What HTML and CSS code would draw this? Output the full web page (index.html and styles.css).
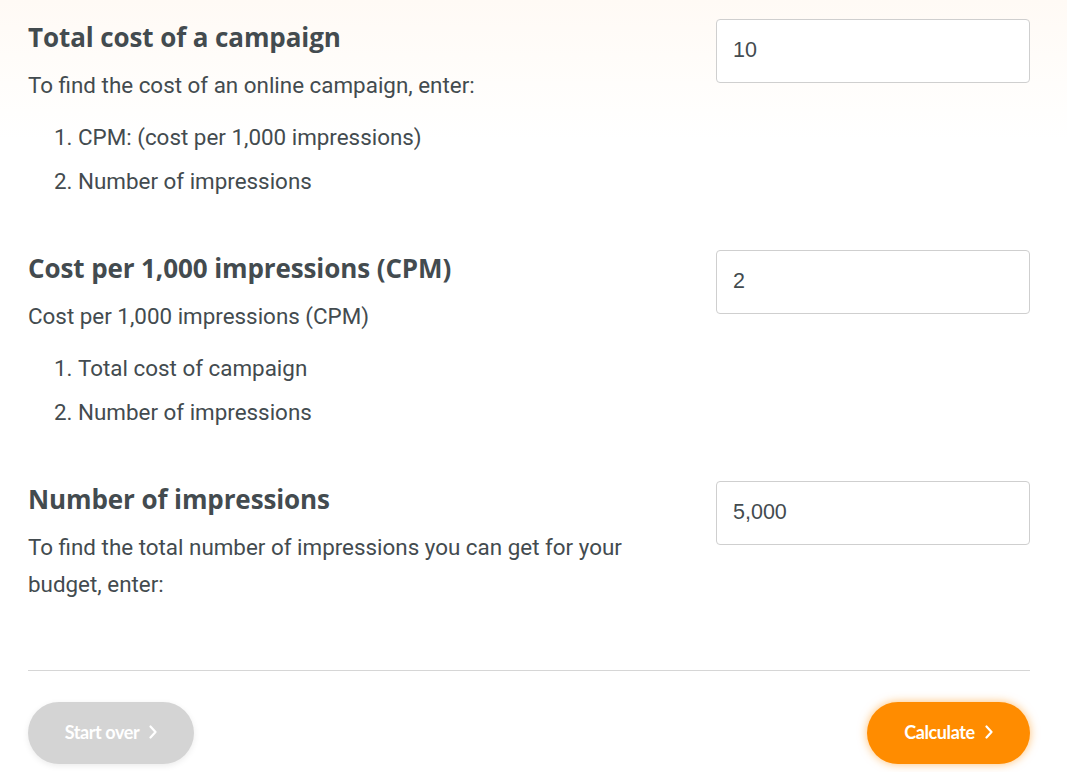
FILE: index.html
```html
<!DOCTYPE html>
<html lang="en">
<head>
<meta charset="utf-8">
<title>CPM Calculator</title>
<link rel="stylesheet" href="styles.css">
</head>
<body>
<div class="calc">
  <section class="row">
    <div class="info">
      <h2 class="title">Total cost of a campaign</h2>
      <p class="desc">To find the cost of an online campaign, enter:</p>
      <ol class="steps">
        <li>CPM: (cost per 1,000 impressions)</li>
        <li>Number of impressions</li>
      </ol>
    </div>
    <input class="field" type="text" value="10">
  </section>
  <section class="row">
    <div class="info">
      <h2 class="title">Cost per 1,000 impressions (CPM)</h2>
      <p class="desc">Cost per 1,000 impressions (CPM)</p>
      <ol class="steps">
        <li>Total cost of campaign</li>
        <li>Number of impressions</li>
      </ol>
    </div>
    <input class="field" type="text" value="2">
  </section>
  <section class="row">
    <div class="info">
      <h2 class="title">Number of impressions</h2>
      <p class="desc">To find the total number of impressions you can get for your budget, enter:</p>
    </div>
    <input class="field" type="text" value="5,000">
  </section>
  <hr class="sep">
  <div class="actions">
    <button class="btn btn-reset" type="button">Start over <svg class="chev" viewBox="0 0 8 14" width="8" height="14"><polyline points="1.5,1.5 6.5,7 1.5,12.5" fill="none" stroke="currentColor" stroke-width="2.2" stroke-linecap="round" stroke-linejoin="round"/></svg></button>
    <button class="btn btn-go" type="button">Calculate <svg class="chev" viewBox="0 0 8 14" width="8" height="14"><polyline points="1.5,1.5 6.5,7 1.5,12.5" fill="none" stroke="currentColor" stroke-width="2.2" stroke-linecap="round" stroke-linejoin="round"/></svg></button>
  </div>
</div>
</body>
</html>
```

FILE: styles.css
```css
html, body {
  margin: 0;
  padding: 0;
}
body {
  background: linear-gradient(to bottom, #fffaf5 0px, #ffffff 140px);
  color: #434b4f;
  font-family: Roboto, "Liberation Sans", sans-serif;
  width: 1067px;
  height: 772px;
  overflow: hidden;
}
.calc {
  padding: 19px 37px 0 28px;
}
.row {
  display: flex;
  justify-content: space-between;
  align-items: flex-start;
  margin-bottom: 47px;
}
.row:last-of-type {
  margin-bottom: 0;
}
.info {
  width: 620px;
}
.title {
  margin: 0;
  font-family: "Open Sans", "Noto Sans", sans-serif;
  font-weight: 700;
  font-size: 26px;
  line-height: 36px;
  letter-spacing: -0.1px;
  color: #434b4f;
}
.desc {
  margin: 12px 0 0;
  font-size: 22.4px;
  line-height: 37px;
}
.steps {
  margin: 11px 0 0;
  padding-left: 50px;
  font-size: 22.4px;
  line-height: 44px;
}
.field {
  box-sizing: border-box;
  width: 314px;
  height: 64px;
  margin: 0;
  padding: 0 16px 2px;
  border: 1px solid #cfcfcf;
  border-radius: 4px;
  background: #fff;
  font-family: "Liberation Sans", Arial, sans-serif;
  font-size: 21.5px;
  color: #434b4f;
  outline: none;
}
.sep {
  margin: 67px 0 0;
  border: 0;
  border-top: 1px solid #d6d6d6;
  height: 0;
}
.actions {
  display: flex;
  justify-content: space-between;
  margin-top: 31px;
}
.btn {
  display: inline-flex;
  align-items: center;
  justify-content: center;
  gap: 10px;
  height: 62px;
  padding: 0 0 3px;
  border: 0;
  border-radius: 31px;
  font-family: "Lato", "Open Sans", sans-serif;
  font-weight: 700;
  font-size: 18px;
  letter-spacing: -0.4px;
  color: #fff;
  cursor: pointer;
}
.btn-reset {
  width: 166px;
  background: #d4d4d4;
  box-shadow: 0 2px 6px rgba(0, 0, 0, 0.08);
}
.btn-go {
  width: 163px;
  background: #ff8c00;
  box-shadow: 0 0 10px rgba(255, 140, 0, 0.55);
}
.chev {
  display: block;
}
```
